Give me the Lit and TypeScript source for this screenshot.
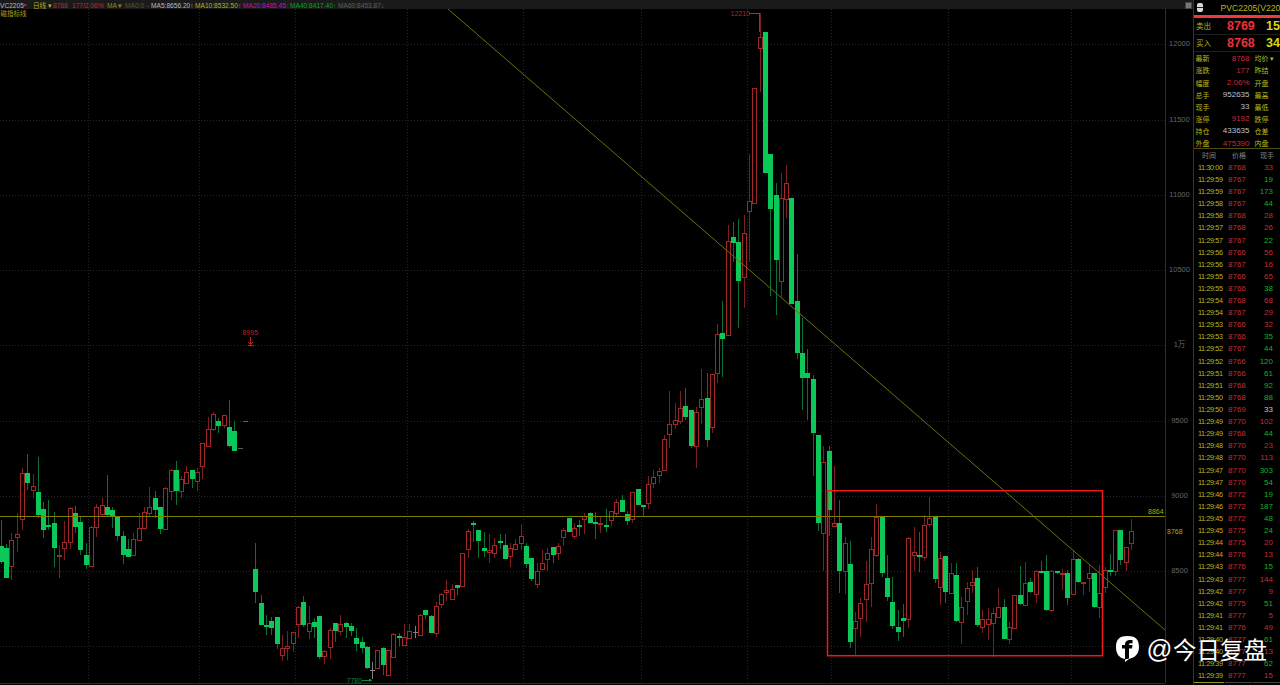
import { LitElement, html, css, svg } from "lit";
import { customElement } from "lit/decorators.js";

type Candle = [string, number, number, number, number] | null;

const D: Candle[] = [
["g",520,546,562,564],["g",544,548,578,578],["r",533,540,566,580],["r",513,534,537,552],["r",468,473,519,530],
["g",454,473,483,490],["r",474,486,490,498],["g",457,492,515,518],["g",502,509,530,538],["g",500,525,527,530],
["g",512,523,548,567],["r",545,555,556,578],["r",521,542,548,560],["r",507,508,542,549],["g",506,513,527,533],
["g",517,522,550,555],["g",543,555,565,569],["r",526,527,566,567],["r",504,507,527,537],["r",498,505,514,517],
["g",475,507,515,516],["g",507,510,516,528],["g",516,517,536,541],["g",531,536,555,564],["g",539,549,557,557],
["r",533,539,555,555],["r",513,528,540,540],["r",507,512,528,528],["r",487,507,513,517],["g",491,498,510,518],
["g",507,507,529,534],["r",487,488,529,529],["r",469,470,491,500],["g",461,470,491,505],["r",476,479,491,498],
["r",466,472,483,484],["g",470,470,479,488],["r",468,472,481,491],["r",443,443,466,479],["r",417,429,446,447],
["r",412,414,429,431],["g",418,421,426,433],["r",415,415,425,428],["g",400,427,446,447],["g",421,431,451,451],
["d",448,448,449,449],["d",421,421,422,422],null,["g",543,569,592,603],["g",595,603,625,625],
["g",615,625,627,635],["g",617,621,628,635],["g",617,617,644,649],["r",635,648,655,661],["r",631,646,648,660],
["r",632,632,643,652],["r",606,607,624,638],["g",596,602,625,627],["r",606,623,631,639],["g",618,622,627,638],
["g",616,616,657,659],["r",650,651,656,664],["r",628,630,647,659],["g",623,623,631,642],["r",615,624,631,635],
["g",622,623,627,638],["g",623,626,631,636],["g",628,638,644,651],["g",637,642,648,653],["g",646,647,668,669],
["w",662,670,670,679],["r",650,650,668,668],["g",647,648,665,675],["r",650,650,675,676],["r",633,634,657,658],
["g",633,636,638,646],["r",624,637,645,645],["r",624,631,638,638],["w",626,632,632,638],["r",614,615,635,635],
["g",610,610,615,619],["g",615,616,633,633],["r",602,606,633,637],["r",593,594,604,608],["r",580,590,592,601],
["r",584,589,599,599],["g",585,585,588,595],["r",553,553,586,586],["r",529,531,549,558],["g",521,523,525,542],
["g",530,530,541,558],["g",532,548,551,557],["r",534,550,552,563],["r",538,545,553,558],["g",534,541,542,549],
["g",534,545,559,559],["r",543,548,556,567],["r",539,544,549,549],["r",524,536,543,550],["g",543,546,564,568],
["g",558,558,579,581],["r",563,571,584,588],["r",550,563,569,569],["r",548,553,559,571],["g",547,547,555,563],
["r",543,546,553,560],["r",528,530,537,546],["g",518,518,532,532],["r",523,528,536,539],["g",520,525,527,536],
["r",513,516,519,534],["g",512,513,523,523],["g",512,522,523,539],["r",517,523,524,533],["g",509,525,526,532],
["r",511,511,520,526],["r",499,502,513,517],["g",495,500,512,512],["g",511,514,521,525],["r",492,492,519,523],
["g",489,489,505,505],["g",505,505,507,517],["r",476,484,503,509],["r",470,477,483,488],["r",468,471,475,483],
["r",435,439,470,470],["r",391,424,434,448],["r",403,420,424,429],["r",391,408,421,424],["g",388,406,417,420],
["g",410,410,446,448],["r",407,412,446,468],["r",369,399,407,424],["g",373,398,440,447],["r",374,374,427,433],
["r",324,334,373,383],["g",301,333,339,377],["r",225,241,335,335],["g",222,237,243,262],["g",219,242,281,328],
["r",215,233,277,308],["r",154,201,211,262],["r",88,88,203,203],["r",13,37,48,92],["g",32,32,173,173],
["g",154,154,209,296],["g",183,195,260,315],["r",173,198,281,297],["r",165,183,199,218],["g",198,198,304,304],
["g",254,301,353,359],["g",318,353,378,410],["g",349,373,378,420],["g",375,379,433,476],["g",435,435,523,531],
["r",446,462,533,571],["g",446,451,510,536],["r",466,523,526,527],["g",500,523,571,593],["r",537,543,571,594],
["g",541,564,642,648],["r",612,621,628,655],["r",598,603,618,637],["r",561,584,599,622],["r",537,549,583,607],
["r",504,517,555,557],["g",517,517,573,577],["g",555,578,597,601],["g",577,602,626,629],["g",610,627,632,641],
["g",604,618,621,637],["r",537,538,619,628],["r",527,552,555,571],["g",532,555,557,572],["r",515,525,557,561],
["r",497,518,524,527],["g",517,517,579,583],["r",552,558,587,605],["g",556,556,592,603],["r",563,573,593,593],
["g",563,575,621,622],["r",597,607,622,644],["r",582,588,601,615],["r",570,582,585,593],["g",567,578,625,627],
["r",610,619,627,633],["r",608,619,624,640],["r",608,613,623,657],["r",588,607,617,617],["g",599,607,639,639],
["r",622,627,639,644],["r",595,595,628,628],["g",566,595,604,605],["r",562,583,605,605],["g",578,582,592,593],
["r",570,571,594,603],["g",561,571,572,573],["g",555,571,610,611],["r",570,571,610,612],["g",571,571,573,574],
["r",569,573,574,590],["g",570,573,598,605],["r",550,559,594,595],["g",558,559,582,583],["r",582,582,583,595],
["r",565,573,578,592],["g",573,573,607,608],["r",565,593,607,618],["r",567,570,587,593],["g",554,570,571,576],
["r",530,530,571,576],["g",530,530,560,565],["r",547,547,562,571],["r",519,531,543,550],
];

const GRID_H = [44, 120, 195, 270, 345, 421, 496, 571, 646];
const GRID_V = [88, 199, 295, 407, 523, 641, 747, 831, 948, 1071];
const AXIS: [string, number][] = [["12000",46],["11500",121.5],["11000",196.5],["10500",271.5],["1万",347],["9500",422.5],["9000",497.5],["8500",572.5]];

const TOP: [string, string][] = [
  ["VC2205", "c-white"], ["日线 ▾", "c-yellow"], ["8768", "c-red"], ["177/2.06%", "c-red"], ["MA ▾", "c-olive"],
  ["MA0:0→", "c-dim"], ["MA5:8656.20↑", "c-white"], ["MA10:8532.50↑", "c-yellow"], ["MA20:8485.45↑", "c-mag"],
  ["MA40:8417.40↑", "c-green"], ["MA60:8453.87↓", "c-gray"],
];

const STATS: [string, string, string, string][] = [
  ["最新","8768","v-red","均价 ▾"],["涨跌","177","v-red","昨结"],["幅度","2.06%","v-red","开盘"],["总手","952635","v-blue","最高"],
  ["现手","33","v-blue","最低"],["涨停","9192","v-red","跌停"],["持仓","433635","v-blue","仓差"],["外盘","475390","v-red","内盘"],
];

const TICKS: [string, string, string][] = [
["11:30:00","8768","33r"],["11:29:59","8767","19g"],["11:29:59","8767","173g"],["11:29:58","8767","44g"],["11:29:58","8768","28r"],
["11:29:57","8768","26r"],["11:29:57","8767","22g"],["11:29:56","8766","56r"],["11:29:56","8767","16r"],["11:29:55","8766","65r"],
["11:29:55","8766","38g"],["11:29:54","8768","68r"],["11:29:54","8767","29r"],["11:29:53","8766","32r"],["11:29:53","8766","35g"],
["11:29:52","8767","44g"],["11:29:52","8766","120g"],["11:29:51","8766","61g"],["11:29:51","8768","92g"],["11:29:50","8768","88g"],
["11:29:50","8769","33w"],["11:29:49","8770","102r"],["11:29:49","8768","44g"],["11:29:48","8770","23r"],["11:29:48","8770","113r"],
["11:29:47","8770","303g"],["11:29:47","8770","54g"],["11:29:46","8772","19g"],["11:29:46","8772","187g"],["11:29:45","8772","48g"],
["11:29:45","8775","24g"],["11:29:44","8775","20r"],["11:29:44","8776","13r"],["11:29:43","8776","15g"],["11:29:43","8777","144r"],
["11:29:42","8777","9r"],["11:29:42","8775","51g"],["11:29:41","8777","5r"],["11:29:41","8776","49r"],["11:29:40","8777","61g"],
["11:29:40","8777","13r"],["11:29:39","8777","62g"],["11:29:39","8777","15r"],
];

@customElement("app-root")
export class AppRoot extends LitElement {
  static styles = css`
    :host {
      display: flex;
      position: relative;
      width: 1280px;
      height: 685px;
      overflow: hidden;
      background: #000;
      font-family: "Liberation Sans", "Noto Sans CJK SC", sans-serif;
    }
    .left { width: 1193px; display: flex; flex-direction: column; }
    .topbar {
      height: 9px; background: #1a1a1a; display: grid; align-items: center;
      grid-template-columns: 33px 20px 19px 35px 18px 26px 44px 48px 47px 48px 48px 1fr;
      font-size: 6.6px; white-space: nowrap; line-height: 9px; position: relative;
    }
    .c-white { color: #b8b8c0; }
    .c-yellow { color: #b0b020; }
    .c-red { color: #c02828; }
    .c-olive { color: #8a8a18; }
    .c-dim { color: #5a5a20; }
    .c-mag { color: #c010c0; }
    .c-green { color: #10a020; }
    .c-gray { color: #606060; }
    .mark { color: #e02020; font-size: 4px; vertical-align: 2px; }
    .winbtn { justify-self: end; width: 7px; height: 7px; background: #777; border: 1px solid #444; box-sizing: border-box; margin-right: 1px; }
    svg.chart { display: block; width: 1193px; height: 676px; }
    .gl { stroke: #242424; stroke-width: 1; stroke-dasharray: 1 2; shape-rendering: crispEdges; }
    .wr { stroke: #7a2020; stroke-width: 1; shape-rendering: crispEdges; }
    .wg { stroke: #0b7035; stroke-width: 1; shape-rendering: crispEdges; }
    .ww { stroke: #808080; stroke-width: 1; shape-rendering: crispEdges; }
    .bg { fill: #0cc858; shape-rendering: crispEdges; }
    .br { fill: #000; stroke: #a02828; stroke-width: 1; shape-rendering: crispEdges; }
    .ax { stroke: #2e2e2e; stroke-width: 1; shape-rendering: crispEdges; }
    .hl { stroke: #808000; stroke-width: 1; shape-rendering: crispEdges; }
    .dg { stroke: #6e6e08; stroke-width: 1; }
    .box { fill: none; stroke: #f01818; stroke-width: 1.5; }
    .mk { stroke: #b02828; stroke-width: 1; fill: none; shape-rendering: crispEdges; }
    .mg { stroke: #0b8a3a; stroke-width: 1; shape-rendering: crispEdges; }
    text { font-size: 7px; font-family: "Liberation Sans", "Noto Sans CJK SC", sans-serif; }
    .ta { fill: #666; text-anchor: middle; font-size: 7.5px; }
    .ty { fill: #a8a810; }
    .tr { fill: #b02828; }
    .tg { fill: #0b8a3a; }
    .tz { fill: #b0a010; font-size: 6.5px; }
    .panel { width: 87px; border-left: 1px solid #333; box-sizing: content-box; display: flex; flex-direction: column; overflow: hidden; }
    .phead { height: 16px; display: flex; align-items: center; white-space: nowrap; }
    .picon { width: 8px; height: 9px; margin-left: 3px; border-radius: 2px; background: #d8d8d8; display: flex; align-items: center; justify-content: center; }
    .picon i { display: block; width: 6px; height: 1px; background: #222; }
    .ptitle { margin-left: 17.5px; font-size: 8.6px; color: #b8b818; }
    .redbar { height: 2.5px; background: #f03a3a; border-right: 1px solid #10a040; }
    .quote { display: grid; grid-template-columns: 33px 39px 1fr; align-items: center; height: 16.5px; border-bottom: 1px solid #1e1e1e; }
    .quote .l { font-size: 7.5px; color: #b8b820; padding-left: 2px; }
    .quote .p { font-size: 12.5px; font-weight: 700; color: #f03038; }
    .quote .q { font-size: 12.5px; font-weight: 700; color: #d8d810; white-space: nowrap; }
    .stats { display: grid; grid-auto-rows: 12.1px; border-bottom: 1px solid #50500e; padding-top: 0.5px; height: 97px; box-sizing: border-box; }
    .srow { display: grid; grid-template-columns: 16px 39.5px 1fr; align-items: center; font-size: 7px; white-space: nowrap; }
    .srow .a { color: #b8b820; padding-left: 1.5px; font-size: 7px; }
    .srow .b { text-align: right; font-size: 8px; }
    .srow .c { color: #b8b820; padding-left: 5px; font-size: 7px; }
    .v-red { color: #c42c3c; }
    .v-blue { color: #b8c0d0; }
    .thead { height: 12.5px; display: grid; grid-template-columns: 30px 30px 1fr; align-items: center; font-size: 7px; color: #808080; text-align: center; flex: none; }
    .tick { display: grid; grid-template-columns: 34px 25px 20px; height: 12.12px; align-items: center; white-space: nowrap; flex: none; }
    .tick .t { color: #b8b820; font-size: 7.2px; letter-spacing: -0.35px; padding-left: 4px; }
    .tick .p { color: #c42c34; font-size: 8px; }
    .tick .q { text-align: right; font-size: 8px; }
    .q-r { color: #c42c34; }
    .q-g { color: #14b024; }
    .q-w { color: #c0c0d0; }
    .tabs { height: 3px; display: flex; flex: none; gap: 1px; }
    .tabs span { display: block; width: 28px; border-top: 1px solid #444; }
    .tabs span:first-child { width: 31px; border-top-color: #9a9a20; }
    .logo { position: absolute; left: 1116px; top: 636px; display: flex; align-items: center; color: #fff; height: 26px; }
    .logo svg { width: 23px; height: 26px; display: block; }
    .logo .at { font-size: 25.5px; margin-left: 7.5px; line-height: 26px; font-family: "Liberation Sans", sans-serif; }
    .logo .cn { font-size: 23.5px; margin-left: 0.5px; line-height: 26px; font-family: "Noto Sans CJK SC", sans-serif; }
  `;

  private candles() {
    return D.map((c, i) => {
      if (!c) return null;
      const [k, wt, bt, bb, wb] = c;
      const cx = Math.round(0.7 + 5.307 * i);
      const xw = cx + 0.5;
      if (k === "d") {
        return svg`<line class="ww" x1=${cx - 2} x2=${cx + 3} y1=${bt + 0.5} y2=${bt + 0.5} style="opacity:.7"></line>`;
      }
      if (k === "w") {
        return svg`<line class="ww" x1=${xw} x2=${xw} y1=${wt} y2=${wb}></line>
          <line class="ww" x1=${cx - 2} x2=${cx + 3} y1=${bt + 0.5} y2=${bt + 0.5}></line>`;
      }
      const wickClass = k === "r" ? "wr" : "wg";
      const body =
        k === "g"
          ? svg`<rect class="bg" x=${cx - 2} y=${bt} width="5" height=${Math.max(bb - bt, 2)}></rect>`
          : svg`<rect class="br" x=${cx - 1.5} y=${bt + 0.5} width="4" height=${Math.max(bb - bt, 1)}></rect>`;
      return svg`<line class=${wickClass} x1=${xw} x2=${xw} y1=${wt} y2=${wb}></line>${body}`;
    });
  }

  private chart() {
    return html`<svg class="chart" viewBox="0 9 1193 676">
      ${GRID_H.map((y) => svg`<line class="gl" x1="0" x2="1165" y1=${y + 0.5} y2=${y + 0.5}></line>`)}
      ${GRID_V.map((x) => svg`<line class="gl" x1=${x + 0.5} x2=${x + 0.5} y1="9" y2="683"></line>`)}
      <line class="ax" x1="1165.5" x2="1165.5" y1="9" y2="683"></line>
      <line class="ax" x1="0" x2="1165" y1="683.5" y2="683.5"></line>
      ${this.candles()}
      <line class="hl" x1="0" x2="1165" y1="516.5" y2="516.5"></line>
      <line class="dg" x1="448" y1="9" x2="1165" y2="630"></line>
      <rect class="box" x="827.5" y="490.7" width="275" height="165"></rect>
      ${AXIS.map(([t, y]) => svg`<text class="ta" x="1179.5" y=${y}>${t}</text>`)}
      <text class="ty" x="1148" y="514">8864</text>
      <text class="ty" x="1167" y="534">8768</text>
      <text class="tz" x="0.5" y="16">磁指标线</text>
      <text class="tr" x="730.5" y="15.5">12210</text>
      <path class="mk" d="M749 13.5H759.5V32"></path>
      <text class="tr" x="242.5" y="334.5">8995</text>
      <path class="mk" d="M250.5 337V345M247.5 345.5H253.5M248.5 342L250.5 345L252.5 342"></path>
      <text class="tg" x="346.5" y="683">7780</text>
      <path class="mg" d="M361.5 680.5H371M369 679L371 680.5L369 682"></path>
    </svg>`;
  }

  render() {
    return html`
      <div class="left">
        <div class="topbar">
          ${TOP.map(([t, c], i) =>
            i === 0
              ? html`<span class=${c}>${t}<span class="mark">■</span></span>`
              : html`<span class=${c}>${t}</span>`
          )}
          <span class="winbtn"></span>
        </div>
        ${this.chart()}
      </div>
      <div class="panel">
        <div class="phead">
          <span class="picon"><i></i></span>
          <span class="ptitle">PVC2205(V220</span>
        </div>
        <div class="redbar"></div>
        <div class="quote"><span class="l">卖出</span><span class="p">8769</span><span class="q">15</span></div>
        <div class="quote"><span class="l">买入</span><span class="p">8768</span><span class="q">34</span></div>
        <div class="stats">
          ${STATS.map(
            ([a, b, cls, c]) => html`<div class="srow">
              <span class="a">${a}</span><span class="b ${cls}">${b}</span><span class="c">${c}</span>
            </div>`
          )}
        </div>
        <div class="thead"><span>时间</span><span>价格</span><span>现手</span></div>
        ${TICKS.map(([t, p, q]) => {
          const dir = q.slice(-1);
          return html`<div class="tick">
            <span class="t">${t}</span><span class="p">${p}</span><span class="q q-${dir}">${q.slice(0, -1)}</span>
          </div>`;
        })}
        <div class="tabs"><span></span><span></span><span></span></div>
      </div>
      <div class="logo">
        <svg viewBox="0 0 23 26">
          <path fill="#fff" d="M11.5 0C19 0 23 3 23 11C23 18 19 21.5 13 23L9 26V23C3 22 0 18 0 11C0 3 4 0 11.5 0Z"></path>
          <path fill="#000" d="M9 23.5V12.5H6V9H9C9 5 11 3.5 16.5 4V7.5C14 7 13 7.5 13 9H16.5L16 12.5H13V22.5Z"></path>
        </svg>
        <span class="at">@</span><span class="cn">今日复盘</span>
      </div>
    `;
  }
}
